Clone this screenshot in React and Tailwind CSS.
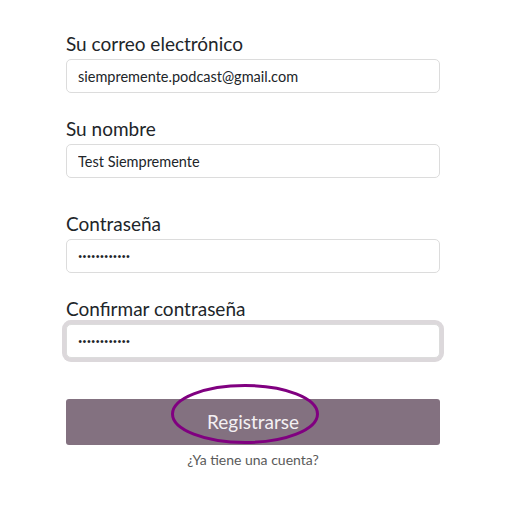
const Field = ({ label, value, type = 'text', focused = false, className = '' }) => (
  <div className={`flex flex-col ${className}`}>
    <label className="text-[19px] leading-[26px] text-[#212529] mb-[2px]">{label}</label>
    <input
      type={type}
      defaultValue={value}
      readOnly
      className={`h-[34px] w-full rounded-[5px] border border-[#dcdcdc] bg-white px-[11px] text-[#212529] outline-none ${
        type === 'password' ? 'text-[7.5px]' : 'text-[14.5px]'
      } ${focused ? 'ring-4 ring-[#dcd8db] border-[#c9c2c7]' : ''}`}
    />
  </div>
);

export default function App() {
  return (
    <div className="min-h-[515px] w-[518px] bg-white" style={{ fontFamily: 'Lato, "Noto Sans", sans-serif' }}>
      <div className="ml-[66px] w-[374px] pt-[31px]">
        <Field label="Su correo electrónico" value="siempremente.podcast@gmail.com" />
        <Field label="Su nombre" value="Test Siempremente" className="mt-[23px]" />
        <Field label="Contraseña" value="............" type="password" className="mt-[33px]" />
        <Field label="Confirmar contraseña" value="............" type="password" focused className="mt-[23px]" />

        <div className="relative mt-[41px]">
          <button className="h-[46px] w-full rounded-[3px] bg-[#837180] text-[19px] text-[#f4f0f3]">
            Registrarse
          </button>
          <svg
            className="pointer-events-none absolute left-[105px] top-[-15px]"
            width="148"
            height="60"
            viewBox="0 0 148 60"
          >
            <ellipse cx="74" cy="30" rx="72.5" ry="28.5" fill="none" stroke="#800080" strokeWidth="3" />
          </svg>
        </div>
        <div className="mt-[4px] text-center text-[14px] text-[#5a5a5a]">
          <a href="#" className="hover:underline">¿Ya tiene una cuenta?</a>
        </div>
      </div>
    </div>
  );
}
